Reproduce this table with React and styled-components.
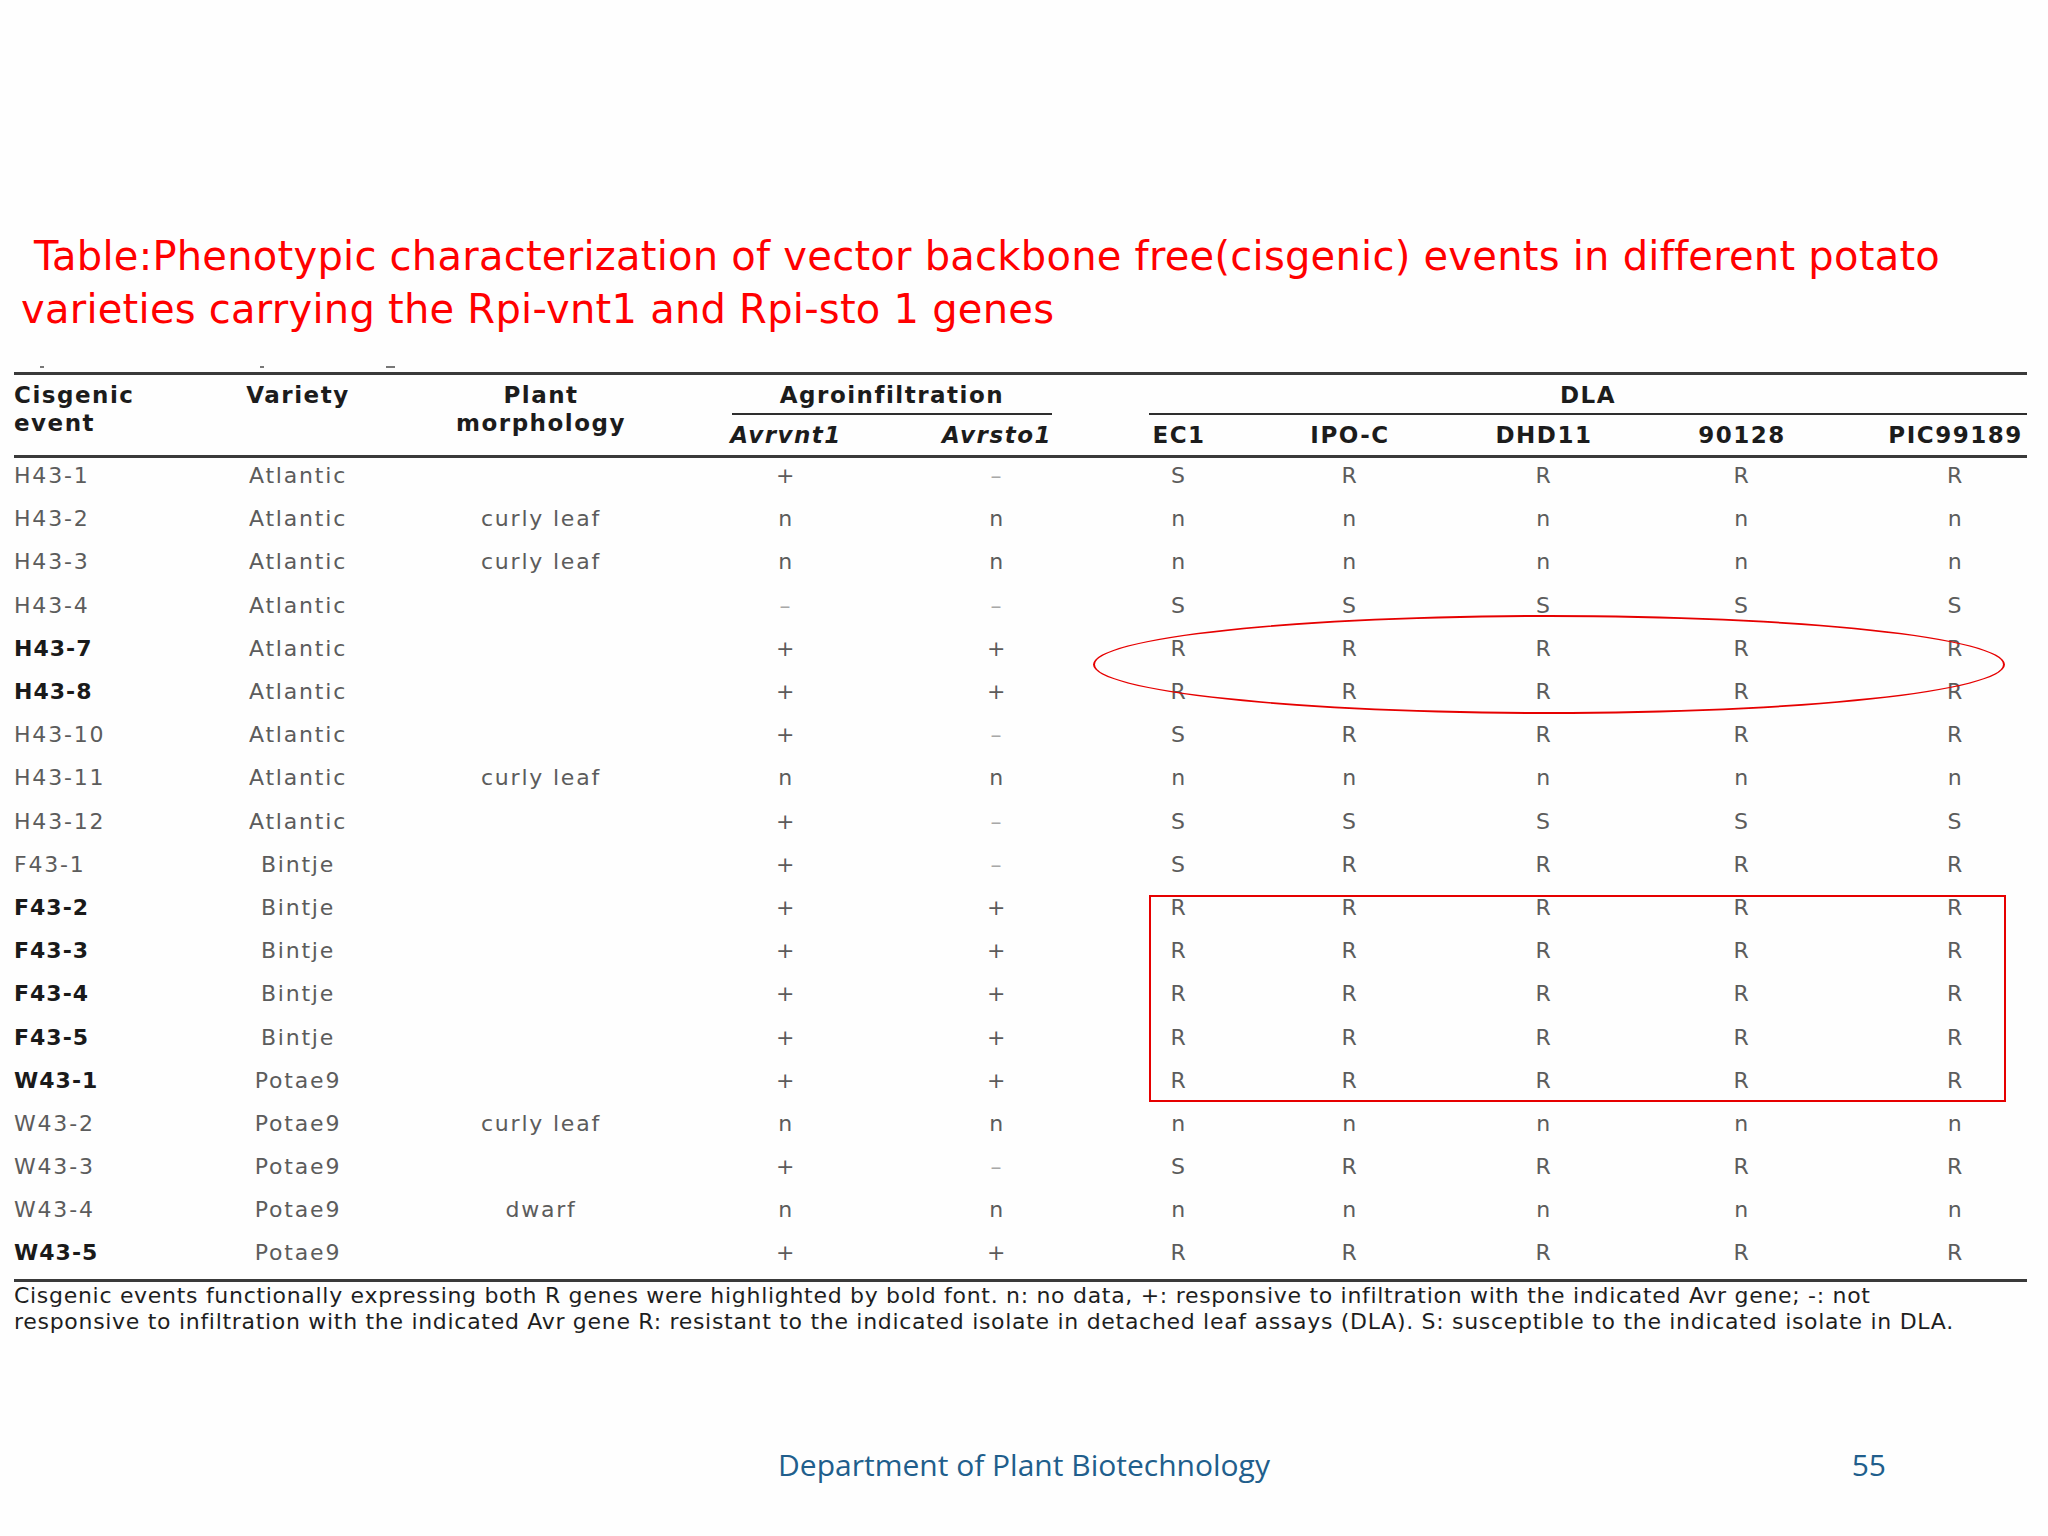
import React from "react";
import styled, { createGlobalStyle } from "styled-components";

const COLS = "186px 196px 290px 200px 222px 142px 200px 188px 208px 181px";

const rows = [
  ["H43-1", "Atlantic", "", "+", "–", "S", "R", "R", "R", "R"],
  ["H43-2", "Atlantic", "curly leaf", "n", "n", "n", "n", "n", "n", "n"],
  ["H43-3", "Atlantic", "curly leaf", "n", "n", "n", "n", "n", "n", "n"],
  ["H43-4", "Atlantic", "", "–", "–", "S", "S", "S", "S", "S"],
  ["H43-7", "Atlantic", "", "+", "+", "R", "R", "R", "R", "R", true],
  ["H43-8", "Atlantic", "", "+", "+", "R", "R", "R", "R", "R", true],
  ["H43-10", "Atlantic", "", "+", "–", "S", "R", "R", "R", "R"],
  ["H43-11", "Atlantic", "curly leaf", "n", "n", "n", "n", "n", "n", "n"],
  ["H43-12", "Atlantic", "", "+", "–", "S", "S", "S", "S", "S"],
  ["F43-1", "Bintje", "", "+", "–", "S", "R", "R", "R", "R"],
  ["F43-2", "Bintje", "", "+", "+", "R", "R", "R", "R", "R", true],
  ["F43-3", "Bintje", "", "+", "+", "R", "R", "R", "R", "R", true],
  ["F43-4", "Bintje", "", "+", "+", "R", "R", "R", "R", "R", true],
  ["F43-5", "Bintje", "", "+", "+", "R", "R", "R", "R", "R", true],
  ["W43-1", "Potae9", "", "+", "+", "R", "R", "R", "R", "R", true],
  ["W43-2", "Potae9", "curly leaf", "n", "n", "n", "n", "n", "n", "n"],
  ["W43-3", "Potae9", "", "+", "–", "S", "R", "R", "R", "R"],
  ["W43-4", "Potae9", "dwarf", "n", "n", "n", "n", "n", "n", "n"],
  ["W43-5", "Potae9", "", "+", "+", "R", "R", "R", "R", "R", true],
];

const App = () => {
  return (
    <Page>
      <GlobalStyle />
      <Title>
        <TitleLine>{"\u00a0Table:Phenotypic characterization of vector backbone free(cisgenic) events in different potato"}</TitleLine>
        <TitleLine>varieties carrying the Rpi-vnt1 and Rpi-sto 1 genes</TitleLine>
      </Title>

      <Remnants>
        <Mark $left={26} $w={4} />
        <Mark $left={216} $w={4} />
        <Mark $left={122} $w={9} />
      </Remnants>

      <Table>
        <Head>
          <HeadCell $col="1" $row="1 / span 2" $align="left">
            Cisgenic
            <br />
            event
          </HeadCell>
          <HeadCell $col="2" $row="1 / span 2">Variety</HeadCell>
          <HeadCell $col="3" $row="1 / span 2">
            Plant
            <br />
            morphology
          </HeadCell>
          <GroupHead $col="4 / span 2" $ml={46} $mr={56}>
            Agroinfiltration
          </GroupHead>
          <GroupHead $col="6 / span 5" $ml={41} $mr={0}>
            DLA
          </GroupHead>
          <SubHead $col="4" $italic>
            Avrvnt1
          </SubHead>
          <SubHead $col="5" $italic>
            Avrsto1
          </SubHead>
          <SubHead $col="6">EC1</SubHead>
          <SubHead $col="7">IPO-C</SubHead>
          <SubHead $col="8">DHD11</SubHead>
          <SubHead $col="9">90128</SubHead>
          <SubHead $col="10" $tail>
            PIC99189
          </SubHead>
        </Head>

        <Body>
          {rows.map((r) => (
            <Row key={r[0]}>
              <EventCell $bold={r[10]}>{r[0]}</EventCell>
              {r.slice(1, 10).map((v, i) => (
                <Cell key={i} $dash={v === "–"} $tail={i === 8}>
                  {v}
                </Cell>
              ))}
            </Row>
          ))}
          <Ring />
          <Box />
        </Body>
      </Table>

      <Note>
        <NoteLine>
          Cisgenic events functionally expressing both R genes were highlighted by bold font. n: no data, +: responsive
          to infiltration with the indicated Avr gene; -: not
        </NoteLine>
        <NoteLine>
          responsive to infiltration with the indicated Avr gene R: resistant to the indicated isolate in detached leaf
          assays (DLA). S: susceptible to the indicated isolate in DLA.
        </NoteLine>
      </Note>

      <Footer>
        <span />
        <Dept>Department of Plant Biotechnology</Dept>
        <PageNo>55</PageNo>
      </Footer>
    </Page>
  );
};

const GlobalStyle = createGlobalStyle`
  html, body {
    margin: 0;
    padding: 0;
    background: #ffffff;
  }
  * {
    box-sizing: border-box;
  }
`;

const Page = styled.div`
  width: 2048px;
  min-height: 1536px;
  display: flex;
  flex-direction: column;
  padding-top: 230px;
  background: #fefefe;
`;

const Title = styled.div`
  padding-left: 21px;
  color: #ff0000;
  font-family: "DejaVu Sans", sans-serif;
  font-size: 40px;
  letter-spacing: 0.25px;
  line-height: 53px;
`;

const TitleLine = styled.div`
  white-space: pre;
`;

const Remnants = styled.div`
  margin: 26px 0 0 14px;
  height: 10px;
  display: flex;
  align-items: center;
`;

const Mark = styled.span`
  margin-left: ${(p) => p.$left}px;
  width: ${(p) => p.$w}px;
  height: 2px;
  background: #777;
`;

const Table = styled.div`
  margin-left: 14px;
  width: 2013px;
  border-top: 3px solid #3a3a3a;
  border-bottom: 3px solid #3a3a3a;
`;

const Head = styled.div`
  display: grid;
  grid-template-columns: ${COLS};
  grid-template-rows: 40px 40px;
  border-bottom: 3px solid #3a3a3a;
  color: #1c1c1c;
  font-family: "DejaVu Sans", sans-serif;
  font-weight: bold;
  font-size: 23px;
  letter-spacing: 1.5px;
`;

const HeadCell = styled.div`
  grid-column: ${(p) => p.$col};
  grid-row: ${(p) => p.$row};
  text-align: ${(p) => p.$align || "center"};
  padding-top: 6px;
  line-height: 28px;
`;

const GroupHead = styled.div`
  grid-column: ${(p) => p.$col};
  grid-row: 1;
  margin: 0 ${(p) => p.$mr}px 0 ${(p) => p.$ml}px;
  border-bottom: 2px solid #2e2e2e;
  padding-top: 6px;
  line-height: 28px;
  text-align: center;
`;

const SubHead = styled.div`
  grid-column: ${(p) => p.$col};
  grid-row: 2;
  display: flex;
  align-items: center;
  justify-content: center;
  padding-left: ${(p) => (p.$tail ? "38px" : "0")};
  font-style: ${(p) => (p.$italic ? "italic" : "normal")};
`;

const Body = styled.div`
  position: relative;
`;

const Row = styled.div`
  display: grid;
  grid-template-columns: ${COLS};
  height: 43.2px;
  align-items: center;
  padding-bottom: 8px;
  font-family: "DejaVu Sans", sans-serif;
  font-size: 22px;
  letter-spacing: 1.8px;
  color: #5c5c5c;
`;

const EventCell = styled.div`
  text-align: left;
  letter-spacing: ${(p) => (p.$bold ? "1px" : "1.8px")};
  font-weight: ${(p) => (p.$bold ? "bold" : "normal")};
  color: ${(p) => (p.$bold ? "#1a1a1a" : "#5c5c5c")};
`;

const Cell = styled.div`
  text-align: center;
  padding-left: ${(p) => (p.$tail ? "38px" : "0")};
  color: ${(p) => (p.$dash ? "#a8a8a8" : "#5c5c5c")};
`;

const Ring = styled.div`
  position: absolute;
  left: 1079px;
  top: 157px;
  width: 912px;
  height: 99px;
  border: 2.5px solid #e60000;
  border-radius: 50%;
`;

const Box = styled.div`
  position: absolute;
  left: 1135px;
  top: 437px;
  width: 857px;
  height: 207px;
  border: 2.5px solid #e60000;
`;

const Note = styled.div`
  margin: 1px 0 0 14px;
  font-family: "DejaVu Sans", sans-serif;
  font-size: 22px;
  letter-spacing: 0.7px;
  line-height: 26px;
  color: #1e1e1e;
`;

const NoteLine = styled.div`
  white-space: nowrap;
`;

const Footer = styled.div`
  margin-top: auto;
  padding-bottom: 51px;
  display: grid;
  grid-template-columns: 1fr auto 1fr;
  align-items: center;
  line-height: 40px;
  font-family: "Open Sans", sans-serif;
  font-size: 30px;
  color: #215e8c;
`;

const Dept = styled.div`
  text-align: center;
`;

const PageNo = styled.div`
  justify-self: end;
  padding-right: 162px;
`;

export default App;
